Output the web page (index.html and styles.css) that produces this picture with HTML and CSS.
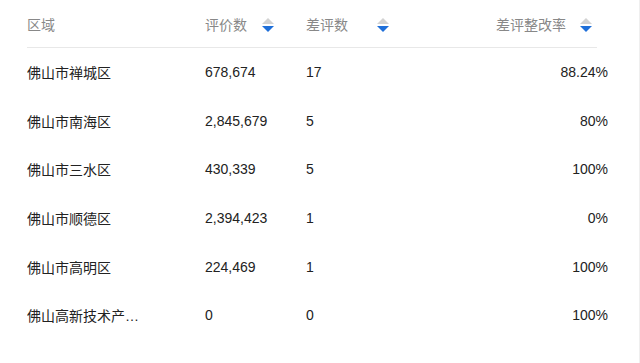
FILE: index.html
```html
<!DOCTYPE html>
<html lang="zh-CN">
<head>
<meta charset="utf-8">
<title>区域差评统计</title>
<link rel="stylesheet" href="styles.css">
</head>
<body>
<div class="page">
  <div class="table">
    <div class="head">
      <div class="hcell">区域</div>
      <div class="hcell">评价数<svg class="sort s2" width="12" height="15" viewBox="0 0 12 15"><path d="M6 0L12 6H0Z" fill="#d2d2d2"/><path d="M0 8H12L6 14Z" fill="#1e6fd9"/></svg></div>
      <div class="hcell">差评数<svg class="sort s3" width="12" height="15" viewBox="0 0 12 15"><path d="M6 0L12 6H0Z" fill="#d2d2d2"/><path d="M0 8H12L6 14Z" fill="#1e6fd9"/></svg></div>
      <div class="hcell right">差评整改率<svg class="sort s4" width="12" height="15" viewBox="0 0 12 15"><path d="M6 0L12 6H0Z" fill="#d2d2d2"/><path d="M0 8H12L6 14Z" fill="#1e6fd9"/></svg></div>
    </div>
    <div class="row"><div class="name">佛山市禅城区</div><div>678,674</div><div>17</div><div class="num">88.24%</div></div>
    <div class="row"><div class="name">佛山市南海区</div><div>2,845,679</div><div>5</div><div class="num">80%</div></div>
    <div class="row"><div class="name">佛山市三水区</div><div>430,339</div><div>5</div><div class="num">100%</div></div>
    <div class="row"><div class="name">佛山市顺德区</div><div>2,394,423</div><div>1</div><div class="num">0%</div></div>
    <div class="row"><div class="name">佛山市高明区</div><div>224,469</div><div>1</div><div class="num">100%</div></div>
    <div class="row"><div class="name">佛山高新技术产业开发区</div><div>0</div><div>0</div><div class="num">100%</div></div>
  </div>
</div>
</body>
</html>
```
FILE: styles.css
```css
html, body {
  margin: 0;
  padding: 0;
  background: #fff;
}
body {
  font-family: "Liberation Sans", "Noto Sans CJK SC", sans-serif;
  font-size: 14px;
  color: #222;
}
.page {
  width: 639px;
  height: 363px;
  border-right: 1px solid #efefef;
  box-sizing: content-box;
}
.table {
  padding-left: 27px;
}
.head {
  width: 570px;
  height: 47px;
  border-bottom: 1px solid #e8e8e8;
  display: grid;
  grid-template-columns: 178px 101px 150px 141px;
  align-items: center;
  color: #888;
}
.hcell {
  display: flex;
  align-items: center;
}
.hcell.right {
  justify-content: flex-end;
  padding-right: 5px;
}
.sort {
  display: block;
  margin-top: 3px;
}
.s2 { margin-left: 15px; }
.s3 { margin-left: 29px; }
.s4 { margin-left: 14px; }
.row {
  width: 581px;
  height: 48.6px;
  display: grid;
  grid-template-columns: 178px 101px 150px 152px;
  align-items: center;
}
.name {
  width: 120px;
  white-space: nowrap;
  overflow: hidden;
  text-overflow: ellipsis;
}
.num {
  text-align: right;
}
```
